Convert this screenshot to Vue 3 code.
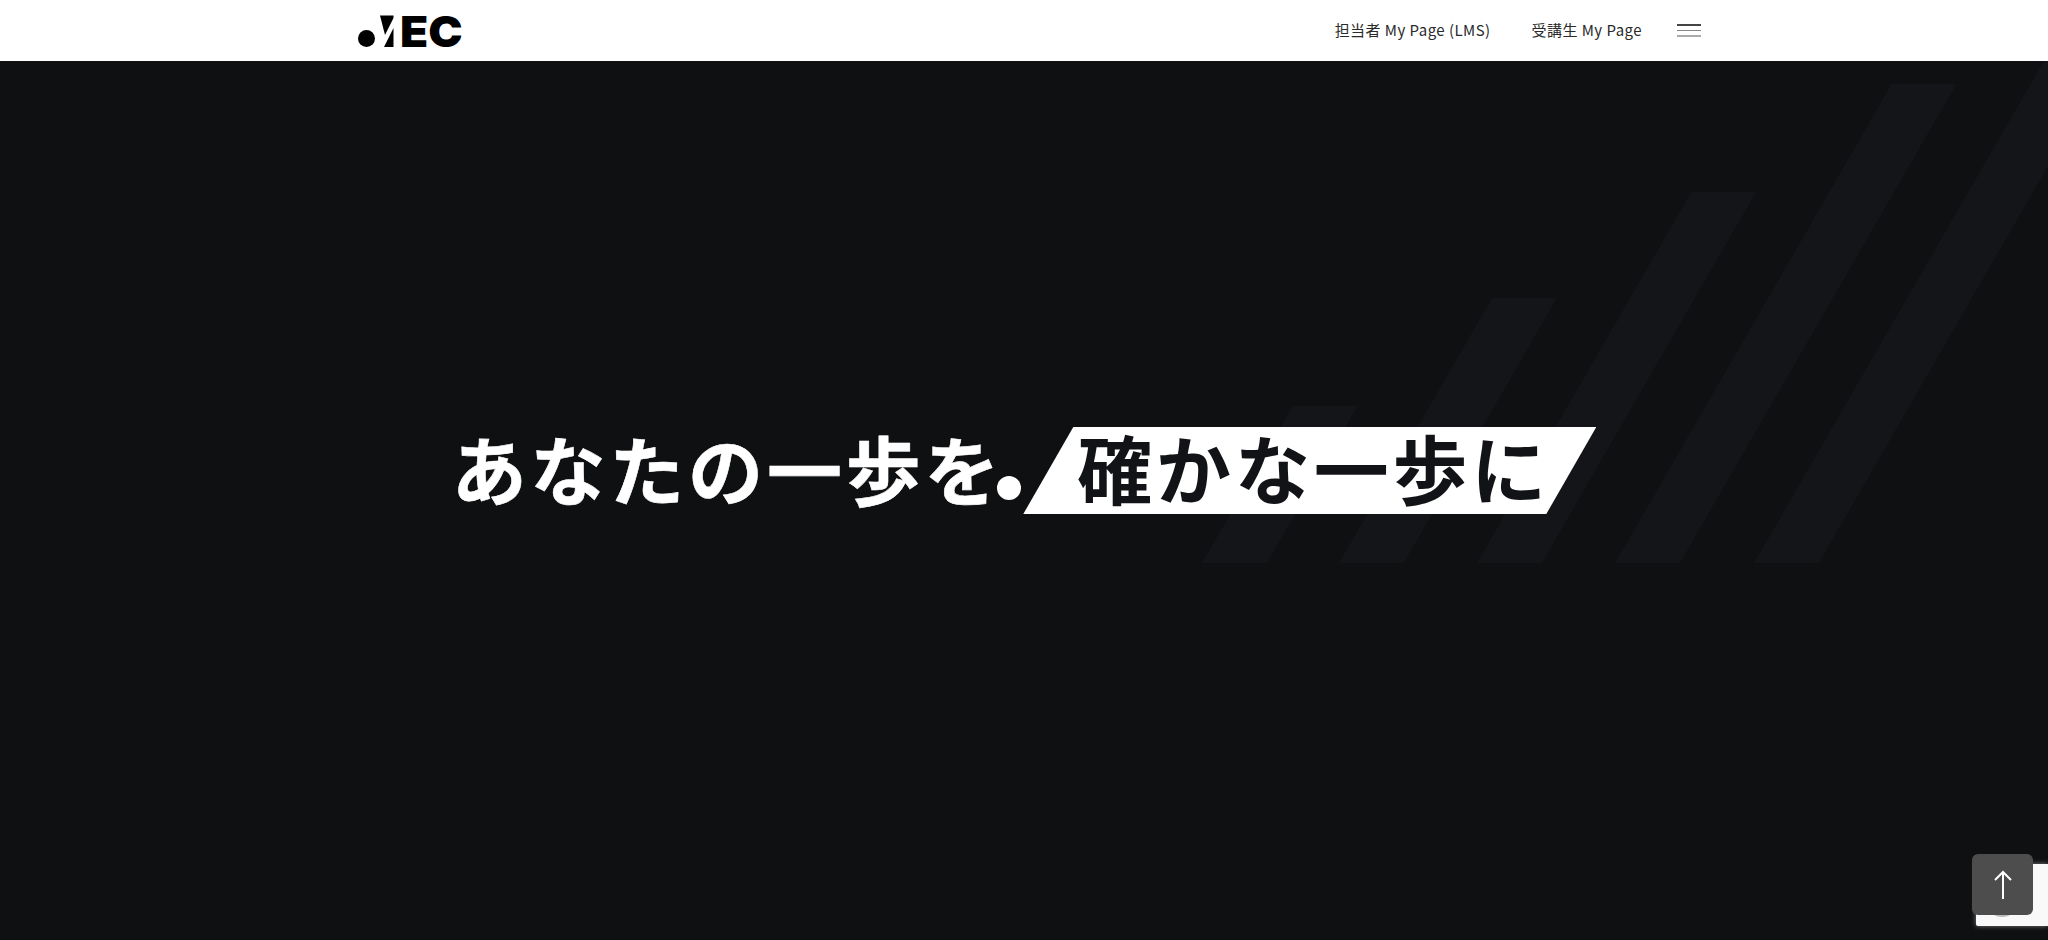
<template>
  <div class="page">
    <header class="header">
      <div class="header-inner">
        <a href="#" class="logo">
          <svg class="logo-mark" width="38" height="32" viewBox="0 0 38 32">
            <circle cx="8.5" cy="23.5" r="8.5" fill="#000" />
            <polygon points="22,0.5 35.5,0.5 35.5,3 27,20" fill="#000" />
            <polygon points="35.5,13 35.5,32 26,32" fill="#000" />
          </svg>
          <span class="logo-text">EC</span>
        </a>
        <nav class="nav">
          <a href="#" class="nav-link">担当者 My Page (LMS)</a>
          <a href="#" class="nav-link">受講生 My Page</a>
          <button class="menu-btn" aria-label="menu">
            <span></span>
            <span></span>
            <span></span>
          </button>
        </nav>
      </div>
    </header>

    <main class="hero">
      <!-- 背景の斜線 -->
      <svg class="stripes" width="2048" height="879" viewBox="0 61 2048 879">
        <polygon
          v-for="s in stripes"
          :key="s.x"
          :points="stripePoints(s)"
          fill="#141518"
        />
      </svg>

      <div class="catch">
        <p class="catch-lead">あなたの一歩を</p>
        <span class="catch-dot"></span>
        <div class="catch-box">
          <p class="catch-strong">確かな一歩に</p>
        </div>
      </div>
    </main>

    <div class="recaptcha"><span class="recaptcha-logo"></span></div>
    <a href="#" class="to-top">
      <svg width="20" height="30" viewBox="0 0 20 30" fill="none" stroke="#fff" stroke-width="2">
        <path d="M10 2V29" />
        <path d="M2 10L10 2L18 10" />
      </svg>
    </a>
  </div>
</template>

<script setup>
// 斜線の下端 x と上端 y
const stripes = [
  { x: 1202, top: 406 },
  { x: 1339, top: 298 },
  { x: 1477, top: 192 },
  { x: 1615, top: 84 },
  { x: 1754, top: 61 },
]

const bottom = 563
const tilt = Math.tan(Math.PI / 6)

const stripePoints = (s) => {
  const dx = (bottom - s.top) * tilt
  return [
    `${s.x + dx},${s.top}`,
    `${s.x + dx + 65},${s.top}`,
    `${s.x + 65},${bottom}`,
    `${s.x},${bottom}`,
  ].join(' ')
}
</script>

<style>
html,
body {
  margin: 0;
  background: #0f1012;
}
</style>

<style scoped>
.page {
  min-height: 940px;
  display: flex;
  flex-direction: column;
  font-family: "Noto Sans CJK JP", "Noto Sans", sans-serif;
  background: #0f1012;
  overflow: hidden;
}

.header {
  height: 61px;
  background: #fff;
}

.header-inner {
  height: 100%;
  padding: 0 347px 0 358px;
  display: flex;
  align-items: center;
  justify-content: space-between;
}

.logo {
  display: flex;
  align-items: center;
  gap: 4px;
  color: #000;
  text-decoration: none;
}

.logo-text {
  font-family: "Inter", "Liberation Sans", sans-serif;
  font-weight: 900;
  font-size: 43px;
  line-height: 32px;
  width: 62px;
  transform: scaleX(1.07);
  transform-origin: left center;
}

.nav {
  display: flex;
  align-items: center;
  gap: 41px;
}

.nav-link {
  font-size: 15px;
  letter-spacing: 0.45px;
  color: #2a2a2a;
  text-decoration: none;
  margin-top: -3px;
}

.menu-btn {
  width: 24px;
  padding: 0;
  margin-left: -6px;
  border: none;
  background: none;
  display: flex;
  flex-direction: column;
  gap: 4px;
}

.menu-btn span {
  display: block;
  height: 1px;
  background: #888;
}

.menu-btn span:first-child {
  height: 2px;
  background: #444;
}

.menu-btn span:last-child {
  height: 2px;
  background: #aaa;
}

.hero {
  position: relative;
  flex: 1;
  display: flex;
  align-items: center;
  justify-content: center;
  padding-bottom: 60px;
}

.stripes {
  position: absolute;
  top: 0;
  left: 0;
}

.catch {
  position: relative;
  display: flex;
  align-items: center;
  color: #fff;
  font-weight: 700;
  font-size: 75px;
  letter-spacing: 3.8px;
}

.catch p {
  margin: 0;
  line-height: 81px;
}

.catch-lead {
  transform: translateY(-3px);
  -webkit-text-stroke: 0.6px currentColor;
}

.catch-dot {
  width: 24px;
  height: 24px;
  margin: 34px 0 0 -6px;
  border-radius: 50%;
  background: #fff;
}

.catch-box {
  margin-left: 2px;
  height: 87px;
  width: 573px;
  clip-path: polygon(50px 0, 100% 0, 523px 100%, 0 100%);
  background: #fff;
  color: #111316;
  padding-left: 54px;
  box-sizing: border-box;
}

.catch-strong {
  transform: translateY(-1px);
}

.recaptcha {
  position: fixed;
  right: 0;
  bottom: 14px;
  width: 72px;
  height: 62px;
  background: #f9f9f9;
  border-radius: 2px 0 0 2px;
  box-shadow: 0 0 5px gray;
}

.recaptcha-logo {
  position: absolute;
  left: 10px;
  top: 20px;
  width: 32px;
  height: 33px;
  border-radius: 50%;
  background: #bbb;
}

.to-top {
  position: fixed;
  right: 15px;
  bottom: 25px;
  width: 61px;
  height: 61px;
  border-radius: 6px;
  background: #4d4d4d;
  display: flex;
  align-items: center;
  justify-content: center;
}
</style>
